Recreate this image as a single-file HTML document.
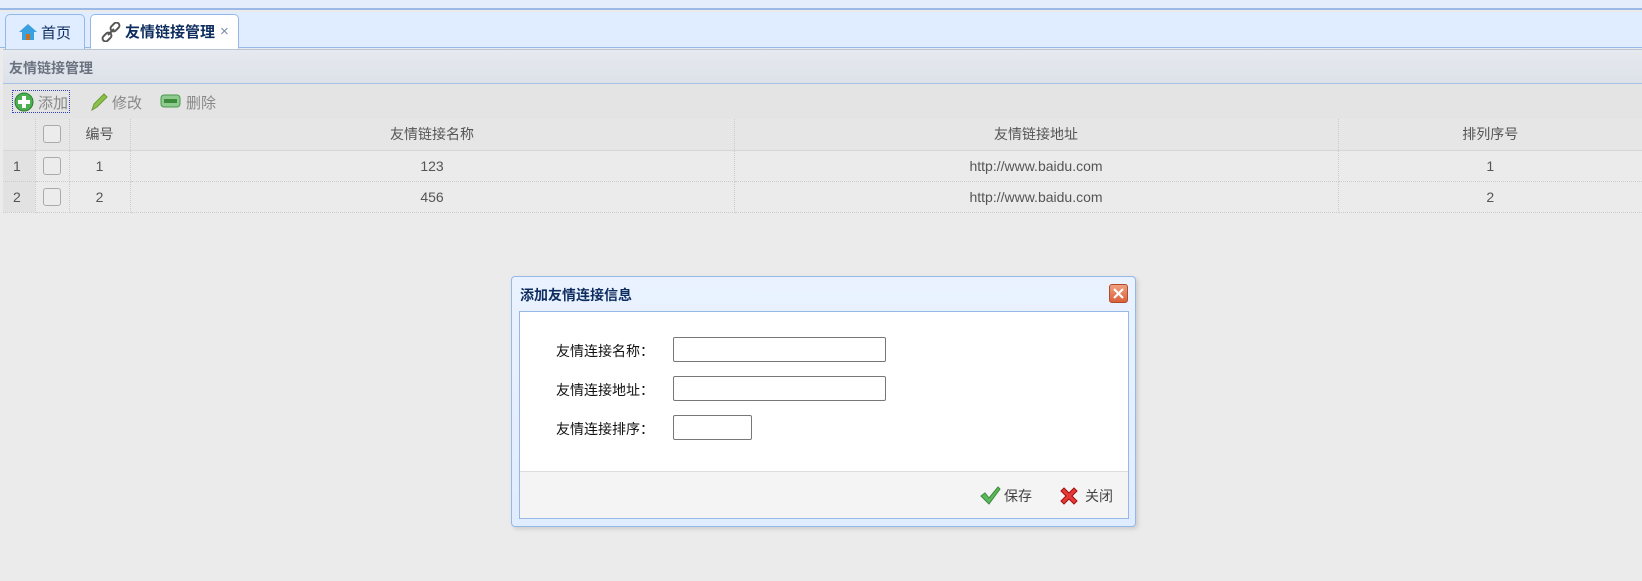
<!DOCTYPE html>
<html><head><meta charset="utf-8"><style>
*{margin:0;padding:0;box-sizing:border-box}
body{width:1642px;height:581px;overflow:hidden;background:#ebebeb;font-family:"Liberation Sans","Noto Sans CJK SC",sans-serif;font-size:14px;color:#444;position:relative}
.abs{position:absolute}
.top{left:0;top:0;width:1642px;height:10px;background:#e3edfc;border-bottom:2px solid #9ab9e6}
.tabbar{left:0;top:12px;width:1642px;height:36px;background:#e0ecff;border-bottom:1px solid #95b8e7}
.tab{top:14px;height:35px;border:1px solid #95b8e7;border-bottom:none;border-radius:5px 5px 0 0;background:#e0ecff;display:flex;align-items:center;font-size:15px;color:#0e2d5f}
.ph{left:3px;top:49px;width:1639px;height:35px;background:linear-gradient(#e6e9ee,#dde2ea);border-top:1px solid #b7c5d9;border-bottom:1px solid #a9c1e2;font-size:14px;font-weight:bold;color:#6b7280;padding:8px 0 0 6px}
.tb{left:3px;top:84px;width:1639px;height:35px;background:#e4e4e4}
.grid{left:3px;top:119px;width:1639px}
table{border-collapse:collapse;width:1639px;table-layout:fixed}
td{height:31px;text-align:center;border-right:1px dotted #ccc;border-bottom:1px dotted #ccc;color:#555;font-size:14px}
td:last-child{border-right:none}
tr.h td{background:#e6e6e6;border-bottom:1px solid #d6d6d6}
td.rn{background:#e2e2e2;text-align:left;padding-left:10px}
.cb{display:inline-block;width:18px;height:18px;border:1px solid #aaa;border-radius:3px;background:#ececec;vertical-align:middle}
.dlg{left:511px;top:276px;width:625px;height:251px;border:1px solid #95b8e7;border-radius:4px;background:linear-gradient(#eaf2ff,#e0ecff);box-shadow:2px 2px 4px #ccc}
.dt{left:8px;top:8px;font-weight:bold;font-size:14px;color:#0e2d5f}
.body{left:7px;top:34px;width:610px;height:208px;background:#fff;border:1px solid #95b8e7;overflow:hidden}
.lbl{font-size:14px;color:#111}
.inp{border:1px solid #777;border-radius:2px;height:25px;background:#fff}
.foot{left:0;top:159px;width:608px;height:48px;background:#f4f4f4;border-top:1px solid #ddd}
</style></head><body>
<div class="abs top"></div>
<div class="abs tabbar"></div>
<div class="abs tab" style="left:5px;width:80px;padding-left:12px">
<svg width="20" height="18" viewBox="0 0 20 18"><path d="M10 1L1 9h3v8h12V9h3z" fill="#3aa0e0"/><rect x="8" y="11" width="4" height="6" fill="#c87020"/></svg><span style="margin-left:3px">首页</span></div>
<div class="abs tab" style="left:90px;width:149px;background:#fff;padding-left:10px;font-weight:bold;border-bottom:1px solid #fff;height:35px">
<svg width="20" height="20" viewBox="0 0 20 20"><g fill="none" stroke="#555" stroke-width="2"><rect x="9" y="2" width="10" height="6" rx="3" transform="rotate(-45 14 5)"/><rect x="1" y="12" width="10" height="6" rx="3" transform="rotate(-45 6 15)"/><path d="M7 13l6-6"/></g></svg><span style="margin-left:4px">友情链接管理</span><span style="margin-left:5px;color:#7a8aa8;font-weight:normal">×</span></div>
<div class="abs ph">友情链接管理</div>
<div class="abs tb">
<div class="abs" style="left:9px;top:6px;width:58px;height:23px;border:1px dotted #3040c0"></div>
<svg class="abs" style="left:11px;top:8px" width="20" height="20" viewBox="0 0 20 20"><circle cx="10" cy="10" r="9" fill="#4caf50" stroke="#2e7d32"/><path d="M10 4v12M4 10h12" stroke="#fff" stroke-width="4"/></svg>
<span class="abs" style="left:35px;top:8px;color:#888;font-size:15px">添加</span>
<svg class="abs" style="left:86px;top:8px" width="20" height="20" viewBox="0 0 20 20"><path d="M3 18l2-6L15 2l3 3L8 15z" fill="#8bc34a" stroke="#6a9a30"/></svg>
<span class="abs" style="left:109px;top:8px;color:#888;font-size:15px">修改</span>
<svg class="abs" style="left:157px;top:9px" width="21" height="16" viewBox="0 0 21 16"><rect x="1" y="2" width="19" height="12" rx="3" fill="#8fca8f" stroke="#4a9a4a"/><rect x="4" y="6" width="13" height="4" fill="#3d8b3d"/></svg>
<span class="abs" style="left:183px;top:8px;color:#888;font-size:15px">删除</span>
</div>
<div class="abs grid"><table>
<colgroup><col style="width:32px"><col style="width:34px"><col style="width:61px"><col style="width:604px"><col style="width:604px"><col></colgroup>
<tr class="h"><td class="rn"></td><td><span class="cb"></span></td><td>编号</td><td>友情链接名称</td><td>友情链接地址</td><td>排列序号</td></tr>
<tr><td class="rn">1</td><td><span class="cb"></span></td><td>1</td><td>123</td><td>http://www.baidu.com</td><td>1</td></tr>
<tr><td class="rn">2</td><td><span class="cb"></span></td><td>2</td><td>456</td><td>http://www.baidu.com</td><td>2</td></tr>
</table></div>
<div class="abs dlg">
<div class="abs dt">添加友情连接信息</div>
<div class="abs" style="left:597px;top:7px;width:19px;height:19px;border-radius:3px;background:linear-gradient(#f0a080,#d9603a);border:1px solid #b04a2a"><svg width="17" height="17" viewBox="0 0 17 17"><path d="M4 4l9 9M13 4l-9 9" stroke="#fff" stroke-width="2.2"/></svg></div>
<div class="abs body">
<span class="abs lbl" style="left:36px;top:29px">友情连接名称：</span>
<div class="abs inp" style="left:153px;top:25px;width:213px"></div>
<span class="abs lbl" style="left:36px;top:68px">友情连接地址：</span>
<div class="abs inp" style="left:153px;top:64px;width:213px"></div>
<span class="abs lbl" style="left:36px;top:107px">友情连接排序：</span>
<div class="abs inp" style="left:153px;top:103px;width:79px"></div>
<div class="abs foot">
<svg class="abs" style="left:460px;top:14px" width="21" height="19" viewBox="0 0 21 19"><path d="M1 10l4-3 4 5L18 1l2 2L9 18z" fill="#5cb85c" stroke="#3a8a3a"/></svg>
<span class="abs" style="left:484px;top:14px;color:#444">保存</span>
<svg class="abs" style="left:538px;top:13px" width="22" height="22" viewBox="0 0 22 22"><path d="M3 6l3-3 5 5 5-5 3 3-5 5 5 5-3 3-5-5-5 5-3-3 5-5z" fill="#e53935" stroke="#a01010"/></svg>
<span class="abs" style="left:565px;top:14px;color:#444">关闭</span>
</div>
</div>
</div>
</body></html>
